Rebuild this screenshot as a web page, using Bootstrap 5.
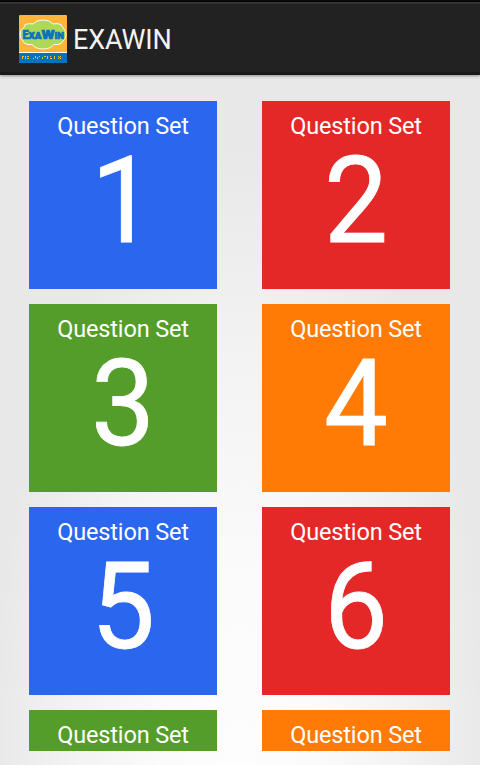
<!DOCTYPE html>
<html lang="en">
<head>
<meta charset="utf-8">
<meta name="viewport" content="width=device-width, initial-scale=1">
<title>EXAWIN</title>
<link href="https://cdn.jsdelivr.net/npm/bootstrap@5.3.0/dist/css/bootstrap.min.css" rel="stylesheet">
<style>
body{font-family:Roboto,"Liberation Sans",sans-serif;background:radial-gradient(ellipse 250px 620px at 50% 100%,#fdfdfd 0%,#fbfbfb 30%,#f3f3f3 65%,#e8e8e8 100%)}
.app-bar{height:75px;padding:3px 19px 0;background:linear-gradient(#0c0c0c 0 1px,#000 1px 2px,#3b3b3b 2px 3px,#303030 3px 4px,#222 4px 72px,#1a1a1a 72px);box-shadow:0 1px 3px rgba(0,0,0,.4)}
.app-title{font-size:27px;line-height:32px;letter-spacing:-.15px;color:#f3f3f3;margin-left:6px;padding-top:2px}
.tile-list{height:676px;padding:26px 30px 0 29px}
.tile-grid{display:grid;grid-template-columns:188px 188px;justify-content:space-between;row-gap:15px}
.tile{height:188px;padding-top:11px}
.tile-label{font-size:23.5px;line-height:28px;letter-spacing:-.15px}
.tile-number{font-size:120px;line-height:122px;transform:scaleX(.95);-webkit-text-stroke:.8px #fff}
.blue{background:#2b66ee}.red{background:#e42828}.green{background:#559d2a}.orange{background:#ff7b06}
</style>
<script src="https://cdn.jsdelivr.net/npm/bootstrap@5.3.0/dist/js/bootstrap.bundle.min.js"></script>
</head>
<body class="vh-100 overflow-hidden d-flex flex-column">
<header class="app-bar d-flex align-items-center flex-shrink-0">
  <svg width="48" height="48" viewBox="0 0 48 48" role="img" aria-label="ExaWin">
    <rect width="48" height="48" rx="1" fill="#ffb43c"/>
    <path d="M0 38h48v9q0 1-1 1H1q-1 0-1-1z" fill="#0872bd"/>
    <path d="M0 37h48v1H0z" fill="#fff"/>
    <path d="M6 9.5Q11 8 14 9Q17 5 24 5T34 9Q38 8 42 9.5Q43 12 45 14Q47 17 47 20Q47 24 44 26Q43 29 39 29.5H35Q31 34 24 34T13 29.5H9Q5 29 4 26Q1 23 1 19.500Q1 15 4 13.500Q6 12 6 9.500z" fill="#acd957" stroke="#fff" stroke-width=".9"/>
    <g fill="#0872bd" stroke="#0872bd" stroke-width=".7" font-family="Roboto,sans-serif" font-weight="900">
      <text x="3.500" y="23.700" font-size="12.500" textLength="6" lengthAdjust="spacingAndGlyphs">E</text>
      <text x="9.500" y="23.700" font-size="9.500" textLength="13" lengthAdjust="spacingAndGlyphs">XA</text>
      <text x="22.500" y="23.700" font-size="12.500" textLength="13" lengthAdjust="spacingAndGlyphs">W</text>
      <text x="35.500" y="23.700" font-size="9.500" textLength="9.500" lengthAdjust="spacingAndGlyphs">IN</text>
    </g>
    <path d="M3 41h2v1H3zm0 1h1v2H3zm3-1h1v3H6zm2 0h2v1H8zm0 2h2v1H8zm6 0h1v1h-1zm2-2h1v2h-1zm2 1h1v2h-1zm2-1h1v1h-1zm3 1h1v2h-1zm2-1h2v1h-2zm3 0h1v3h-1zm3 0h1v1h-1zm0 2h2v1h-2zm4-2h1v3h-1zm4 0h1v1h-1zm2 0h1v1h-1zm-1 1h1v1h-1zm-1 1h1v1h-1zm2 0h1v1h-1z" fill="#e5c323" shape-rendering="crispEdges"/>
  </svg>
  <h1 class="app-title fw-normal mb-0">EXAWIN</h1>
</header>
<main class="tile-list overflow-hidden flex-shrink-0">
  <div class="tile-grid text-white text-center">
    <div class="tile blue"><div class="tile-label">Question Set</div><div class="tile-number">1</div></div>
    <div class="tile red"><div class="tile-label">Question Set</div><div class="tile-number">2</div></div>
    <div class="tile green"><div class="tile-label">Question Set</div><div class="tile-number">3</div></div>
    <div class="tile orange"><div class="tile-label">Question Set</div><div class="tile-number">4</div></div>
    <div class="tile blue"><div class="tile-label">Question Set</div><div class="tile-number">5</div></div>
    <div class="tile red"><div class="tile-label">Question Set</div><div class="tile-number">6</div></div>
    <div class="tile green"><div class="tile-label">Question Set</div></div>
    <div class="tile orange"><div class="tile-label">Question Set</div></div>
  </div>
</main>
</body>
</html>
